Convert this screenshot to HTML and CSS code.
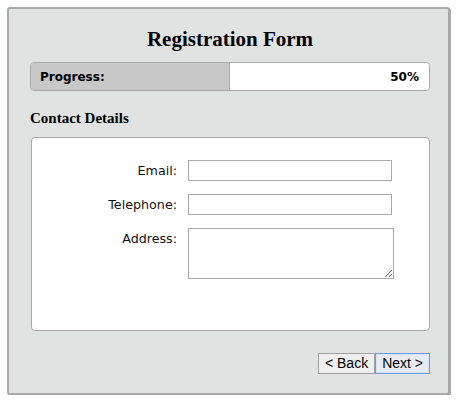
FILE: index.html
```html
<!DOCTYPE html>
<html>
<head>
<meta charset="utf-8">
<link rel="stylesheet" href="styles.css">
</head>
<body>
<div class="wizard">
  <h1 class="title">Registration Form</h1>
  <div class="progress">
    <div class="progress-done" style="width:50%"><span class="progress-label">Progress:</span></div>
    <div class="progress-rest"><span class="progress-value">50%</span></div>
  </div>
  <h2 class="section-title">Contact Details</h2>
  <div class="panel">
    <div class="form-grid">
      <label class="field-label" for="email">Email:</label>
      <input class="field-input" id="email" type="text">
      <label class="field-label" for="tel">Telephone:</label>
      <input class="field-input" id="tel" type="text">
      <label class="field-label" for="addr">Address:</label>
      <textarea class="field-area" id="addr"></textarea>
    </div>
  </div>
  <div class="actions">
    <button class="btn" type="button">&lt; Back</button>
    <button class="btn btn-focus" type="button">Next &gt;</button>
  </div>
</div>
</body>
</html>
```

FILE: styles.css
```css
html, body {
  margin: 0;
  padding: 0;
  background: #ffffff;
}

.wizard {
  box-sizing: border-box;
  width: 443px;
  margin: 7px 0 0 7px;
  padding: 18px 18px 19px 21px;
  background: #e1e2e2;
  border: 2px solid #a9a9a9;
  border-radius: 3px;
  box-shadow: 1px 1px 0 #a9a9a9;
}

.title {
  margin: 0;
  font-family: "Liberation Serif", "Times New Roman", serif;
  font-weight: bold;
  font-size: 21px;
  line-height: 24px;
  text-align: center;
  color: #000;
}

.progress {
  box-sizing: border-box;
  display: flex;
  width: 400px;
  height: 29px;
  margin-top: 11px;
  border: 1px solid #aaaaaa;
  border-radius: 4px;
  overflow: hidden;
  font-family: "DejaVu Sans", Verdana, sans-serif;
  font-weight: bold;
  font-size: 12px;
  color: #000;
}

.progress-done {
  box-sizing: border-box;
  display: flex;
  align-items: center;
  padding-left: 9px;
  background: #c8c8c8;
  border-right: 1px solid #aaaaaa;
}

.progress-rest {
  flex: 1;
  display: flex;
  align-items: center;
  justify-content: flex-end;
  padding-right: 10px;
  background: #ffffff;
}

.section-title {
  margin: 18px 0 0 0;
  font-family: "Liberation Serif", "Times New Roman", serif;
  font-weight: bold;
  font-size: 15px;
  line-height: 18px;
  color: #000;
}

.panel {
  box-sizing: border-box;
  width: 399px;
  height: 194px;
  margin: 10px 0 0 1px;
  padding-top: 22px;
  background: #ffffff;
  border: 1px solid #aaaaaa;
  border-radius: 4px;
}

.form-grid {
  display: grid;
  grid-template-columns: 145px auto;
  column-gap: 11px;
  row-gap: 13px;
  align-items: start;
  font-family: "DejaVu Sans", Verdana, sans-serif;
  font-size: 12.7px;
  color: #111;
}

.field-label {
  text-align: right;
  line-height: 21px;
}

.field-input {
  box-sizing: border-box;
  width: 204px;
  height: 21px;
  margin: 0;
  padding: 1px 3px;
  border: 1px solid #a9a9a9;
  background: #fff;
  font: inherit;
  outline: none;
}

.field-area {
  box-sizing: border-box;
  width: 206px;
  height: 51px;
  margin: 0;
  padding: 2px;
  border: 1px solid #a9a9a9;
  background: #fff;
  font: inherit;
  resize: both;
  outline: none;
}

.actions {
  display: flex;
  justify-content: flex-end;
  margin-top: 22px;
}

.btn {
  box-sizing: border-box;
  height: 21px;
  margin: 0;
  padding: 0 6px;
  font-family: "Liberation Sans", Arial, sans-serif;
  font-size: 14px;
  line-height: 19px;
  color: #000;
  background: #efefef;
  border: 1px solid #a0a0a0;
  border-radius: 0;
}

.btn-focus {
  border-color: #6b9be0;
  background: #e8ecf2;
  box-shadow: inset 0 0 0 1px #d3e2f6;
}
```
